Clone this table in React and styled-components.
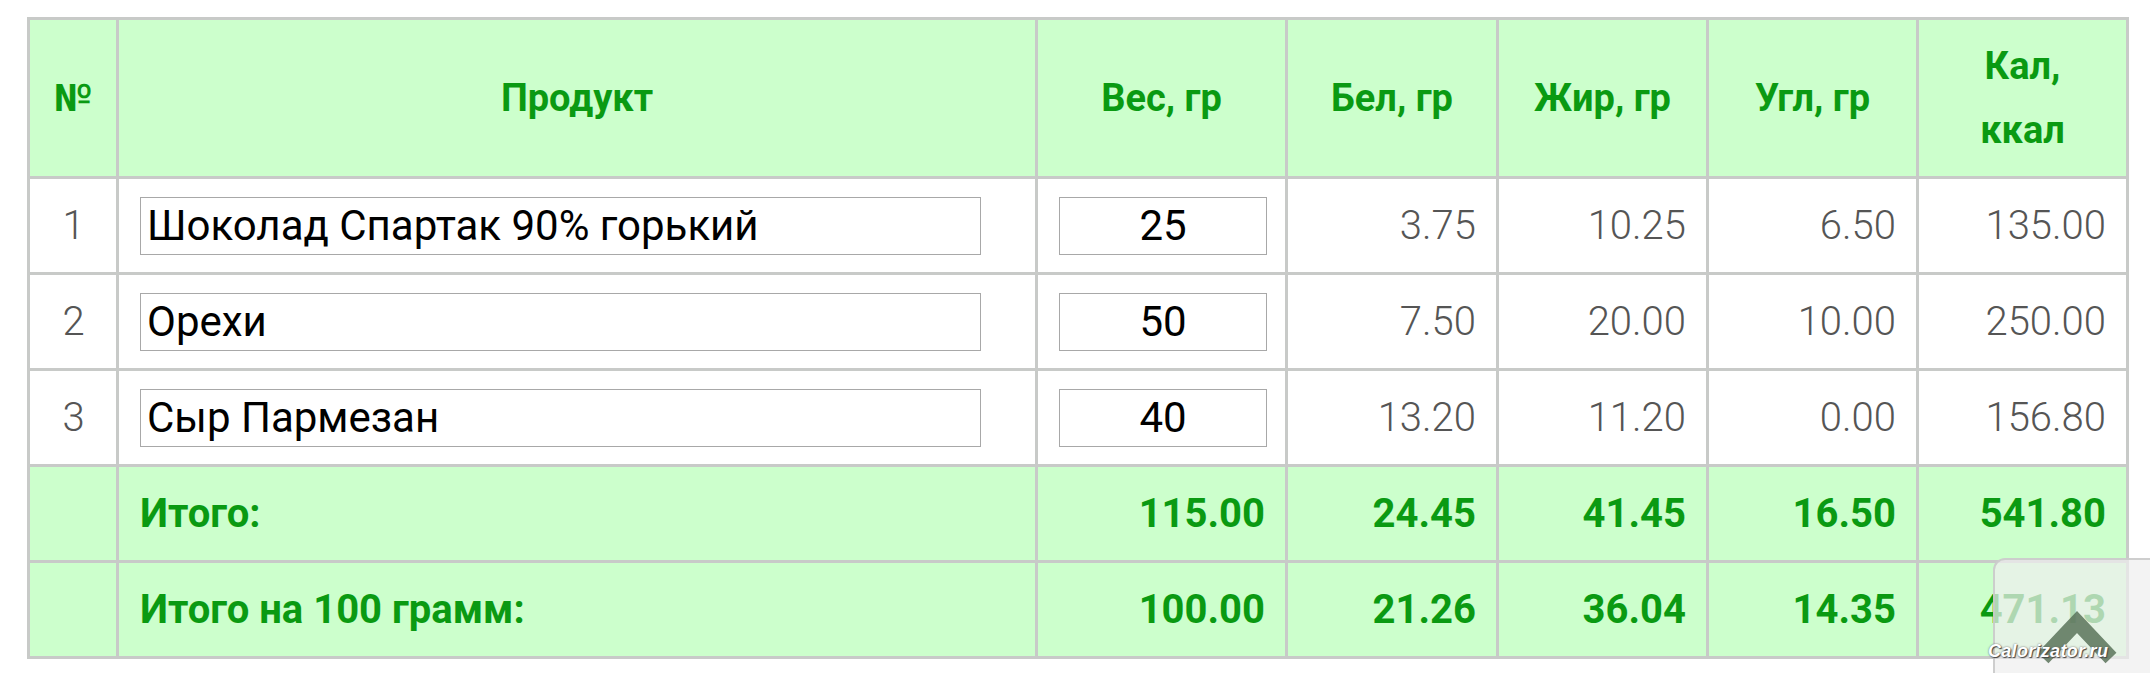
import React from 'react';
import styled, { createGlobalStyle } from 'styled-components';

const LINE = '#c8cac8';
const GREEN = '#0a9a12';
const HEAD_BG = '#ccffcc';

const GlobalStyle = createGlobalStyle`
  html, body {
    margin: 0;
    padding: 0;
    background: #fff;
  }
  body {
    font-family: Roboto, "Liberation Sans", sans-serif;
  }
`;

const Page = styled.div`
  position: relative;
  width: 2150px;
  height: 673px;
  overflow: hidden;
  padding: 17px 0 0 27px;
  box-sizing: border-box;
`;

const Table = styled.table`
  width: 2102px;
  table-layout: fixed;
  border-collapse: separate;
  border-spacing: 0;
  border-top: 3px solid ${LINE};
  border-left: 3px solid ${LINE};
`;

const Row = styled.tr`
  height: ${p => p.$h}px;
  background: ${p => (p.$green ? HEAD_BG : '#fff')};
`;

const HeadCell = styled.th`
  width: ${p => p.$w}px;
  box-sizing: border-box;
  padding: 0 10px;
  border-right: 3px solid ${LINE};
  border-bottom: 3px solid ${LINE};
  color: ${GREEN};
  font-size: 38px;
  font-weight: 700;
  line-height: 64px;
  text-align: center;
  vertical-align: middle;
`;

const Cell = styled.td`
  box-sizing: border-box;
  padding: 0 20px 0 21px;
  border-right: 3px solid ${LINE};
  border-bottom: 3px solid ${LINE};
  text-align: ${p => p.$align || 'right'};
  vertical-align: middle;
  white-space: nowrap;
  color: ${p => (p.$total ? GREEN : '#555')};
  font-size: 40px;
  font-weight: ${p => (p.$total ? 700 : 300)};
`;

const TextInput = styled.input`
  display: block;
  box-sizing: border-box;
  width: ${p => p.$w}px;
  height: 58px;
  margin: 0;
  padding: 0 6px;
  border: 1px solid #a8a8a8;
  background: #fff;
  color: #000;
  font-family: Roboto, "Liberation Sans", sans-serif;
  font-size: 42px;
  font-weight: 400;
  text-align: ${p => p.$align || 'left'};
  outline: none;
`;

const ScrollTop = styled.div`
  position: absolute;
  left: 1993px;
  top: 558px;
  width: 180px;
  height: 140px;
  box-sizing: border-box;
  border: 2px solid rgba(200, 200, 200, 0.85);
  border-radius: 12px;
  background: rgba(238, 238, 238, 0.72);
`;

const Chevron = styled.svg`
  position: absolute;
  left: 40px;
  top: 50px;
`;

const Watermark = styled.div`
  position: absolute;
  left: 1988px;
  top: 641px;
  font-family: "Liberation Sans", Arial, sans-serif;
  font-size: 18px;
  font-weight: 700;
  font-style: italic;
  color: #fff;
  letter-spacing: 0.3px;
  text-shadow: 1px 1px 1px #444, 0 0 2px #666;
`;

const columns = [
  { title: '№', w: 89 },
  { title: 'Продукт', w: 919 },
  { title: 'Вес, гр', w: 250 },
  { title: 'Бел, гр', w: 211 },
  { title: 'Жир, гр', w: 210 },
  { title: 'Угл, гр', w: 210 },
  { title: <>Кал,<br />ккал</>, w: 210 },
];

const items = [
  { n: 1, name: 'Шоколад Спартак 90% горький', weight: '25', values: ['3.75', '10.25', '6.50', '135.00'] },
  { n: 2, name: 'Орехи', weight: '50', values: ['7.50', '20.00', '10.00', '250.00'] },
  { n: 3, name: 'Сыр Пармезан', weight: '40', values: ['13.20', '11.20', '0.00', '156.80'] },
];

const totals = [
  { label: 'Итого:', values: ['115.00', '24.45', '41.45', '16.50', '541.80'] },
  { label: 'Итого на 100 грамм:', values: ['100.00', '21.26', '36.04', '14.35', '471.13'] },
];

export default function App() {
  return (
    <Page>
      <GlobalStyle />
      <Table>
        <thead>
          <Row $h={159} $green>
            {columns.map((c, i) => (
              <HeadCell key={i} $w={c.w}>{c.title}</HeadCell>
            ))}
          </Row>
        </thead>
        <tbody>
          {items.map(item => (
            <Row key={item.n} $h={96}>
              <Cell $align="center">{item.n}</Cell>
              <Cell $align="left">
                <TextInput $w={841} defaultValue={item.name} />
              </Cell>
              <Cell $align="center">
                <TextInput $w={208} $align="center" defaultValue={item.weight} />
              </Cell>
              {item.values.map((v, i) => (
                <Cell key={i}>{v}</Cell>
              ))}
            </Row>
          ))}
          {totals.map(t => (
            <Row key={t.label} $h={96} $green>
              <Cell />
              <Cell $align="left" $total>{t.label}</Cell>
              {t.values.map((v, i) => (
                <Cell key={i} $total>{v}</Cell>
              ))}
            </Row>
          ))}
        </tbody>
      </Table>

      <ScrollTop>
        <Chevron width="90" height="60" viewBox="0 0 90 60">
          <path d="M8 48 L42 12 L76 48" fill="none" stroke="rgba(90,115,90,0.85)" strokeWidth="15" strokeLinejoin="miter" />
        </Chevron>
      </ScrollTop>
      <Watermark>Calorizator.ru</Watermark>
    </Page>
  );
}
